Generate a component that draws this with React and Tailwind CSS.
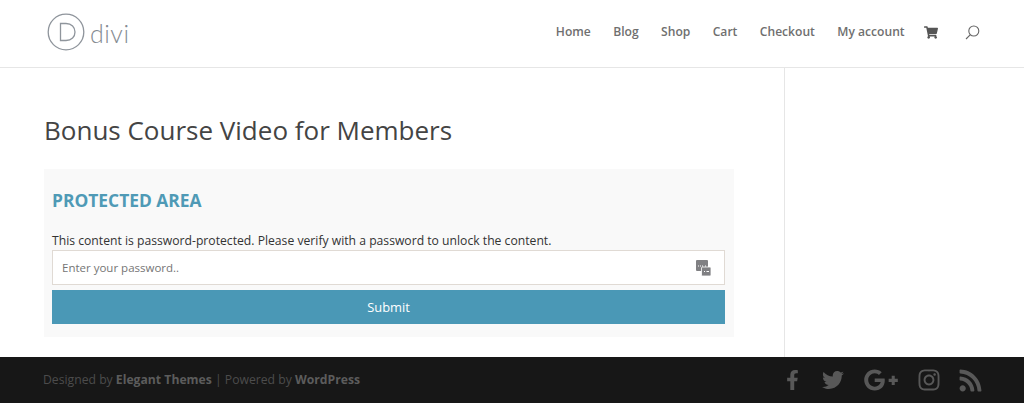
import React from 'react';
import { FaFacebookF, FaTwitter, FaGooglePlusG, FaInstagram, FaRss, FaShoppingCart } from 'react-icons/fa';

const navItems = ['Home', 'Blog', 'Shop', 'Cart', 'Checkout', 'My account'];

const DiviLogo = () => (
    <div className="flex items-center">
        <svg className="w-[38px] h-[38px]" viewBox="0 0 38 38" fill="none" stroke="#8f959c" strokeWidth="1.3">
            <circle cx="19" cy="19" r="17.8" />
            <path d="M13.5 10.5h5.5c5.6 0 9 3.6 9 8.5s-3.4 8.5-9 8.5h-5.5z" />
        </svg>
        <span className="ml-[5px] mt-[3px] text-[25px] leading-none font-light tracking-[0.5px] text-[#858b92] font-['Lato',sans-serif]">divi</span>
    </div>
);

const KeyIcon = () => (
    <svg className="w-[15px] h-[16px]" viewBox="0 0 15 16">
        <rect x="0" y="0" width="12" height="11" rx="1" fill="#808083" />
        <rect x="5.5" y="7" width="9.5" height="9" rx="1" fill="#808083" stroke="#fff" strokeWidth="0.8" />
        <path d="M2 6h1M4 6h1M6 6h1M9 6h1" stroke="#fff" strokeWidth="1" />
        <path d="M8 11.5h1M10.5 11.5h2.5" stroke="#fff" strokeWidth="1.2" />
    </svg>
);

export default function App() {
    return (
        <div className="w-[1024px] h-[403px] flex flex-col bg-white overflow-hidden font-['Open_Sans',sans-serif]">
            <header className="h-[68px] shrink-0 flex items-center justify-between pl-[47px] pr-[44px] border-b border-[#e6e6e6]">
                <div className="-mt-[3px]"><DiviLogo /></div>
                <nav className="flex items-center -mt-[2px]">
                    {navItems.map(item => (
                        <a key={item} className="mr-[22.4px] text-[12.1px] font-semibold text-[#6f6f6f]">{item}</a>
                    ))}
                    <FaShoppingCart className="w-[14px] h-[13px] text-[#555] -ml-[3px] mr-[27px]" />
                    <svg className="w-[15px] h-[15px]" viewBox="0 0 15 15" fill="none" stroke="#666" strokeWidth="1.1">
                        <circle cx="8.8" cy="6" r="5" />
                        <path d="M5.4 9.6L1 14" />
                    </svg>
                </nav>
            </header>

            <main className="flex-1 flex">
                <div className="w-[785px] shrink-0 border-r border-[#e6e6e6] pl-[44px] pr-[50px] pt-[45px]">
                    <h1 className="text-[26px] leading-[34px] text-[#444] font-normal">Bonus Course Video for Members</h1>
                    <section className="mt-[22px] h-[168px] bg-[#f9f9f9] px-[8px] pt-[20px]">
                        <h2 className="text-[17.4px] leading-[22px] font-bold text-[#4f9ab6]">PROTECTED AREA</h2>
                        <p className="mt-[21px] text-[12.18px] leading-[18px] text-[#333]">
                            This content is password-protected. Please verify with a password to unlock the content.
                        </p>
                        <div className="mr-[1px] h-[35px] flex items-center justify-between bg-white border border-[#e0dad4] pl-[9px] pr-[13px]">
                            <span className="text-[11.5px] text-[#757575] mt-[1px]">Enter your password..</span>
                            <KeyIcon />
                        </div>
                        <button className="block w-[673px] h-[34px] mt-[5px] pt-[1px] bg-[#4a98b6] text-white text-[12.9px] font-medium">Submit</button>
                    </section>
                </div>
                <aside className="flex-1" />
            </main>

            <footer className="h-[46px] shrink-0 flex items-center justify-between bg-[#171717] pl-[43px] pr-[41px]">
                <p className="text-[12.2px] text-[#4c4c4c]">
                    Designed by <span className="font-bold text-[#5c5c5c]">Elegant Themes</span> | Powered by <span className="font-bold text-[#5c5c5c]">WordPress</span>
                </p>
                <div className="flex items-center text-[#585858]">
                    <FaFacebookF className="w-[13px] h-[20px] mr-[23px]" />
                    <FaTwitter className="w-[22px] h-[22px] mr-[19px]" />
                    <FaGooglePlusG className="w-[36px] h-[28px] mr-[18px]" />
                    <FaInstagram className="w-[24px] h-[24px] mr-[17px]" />
                    <FaRss className="w-[25px] h-[25px]" />
                </div>
            </footer>
        </div>
    );
}
